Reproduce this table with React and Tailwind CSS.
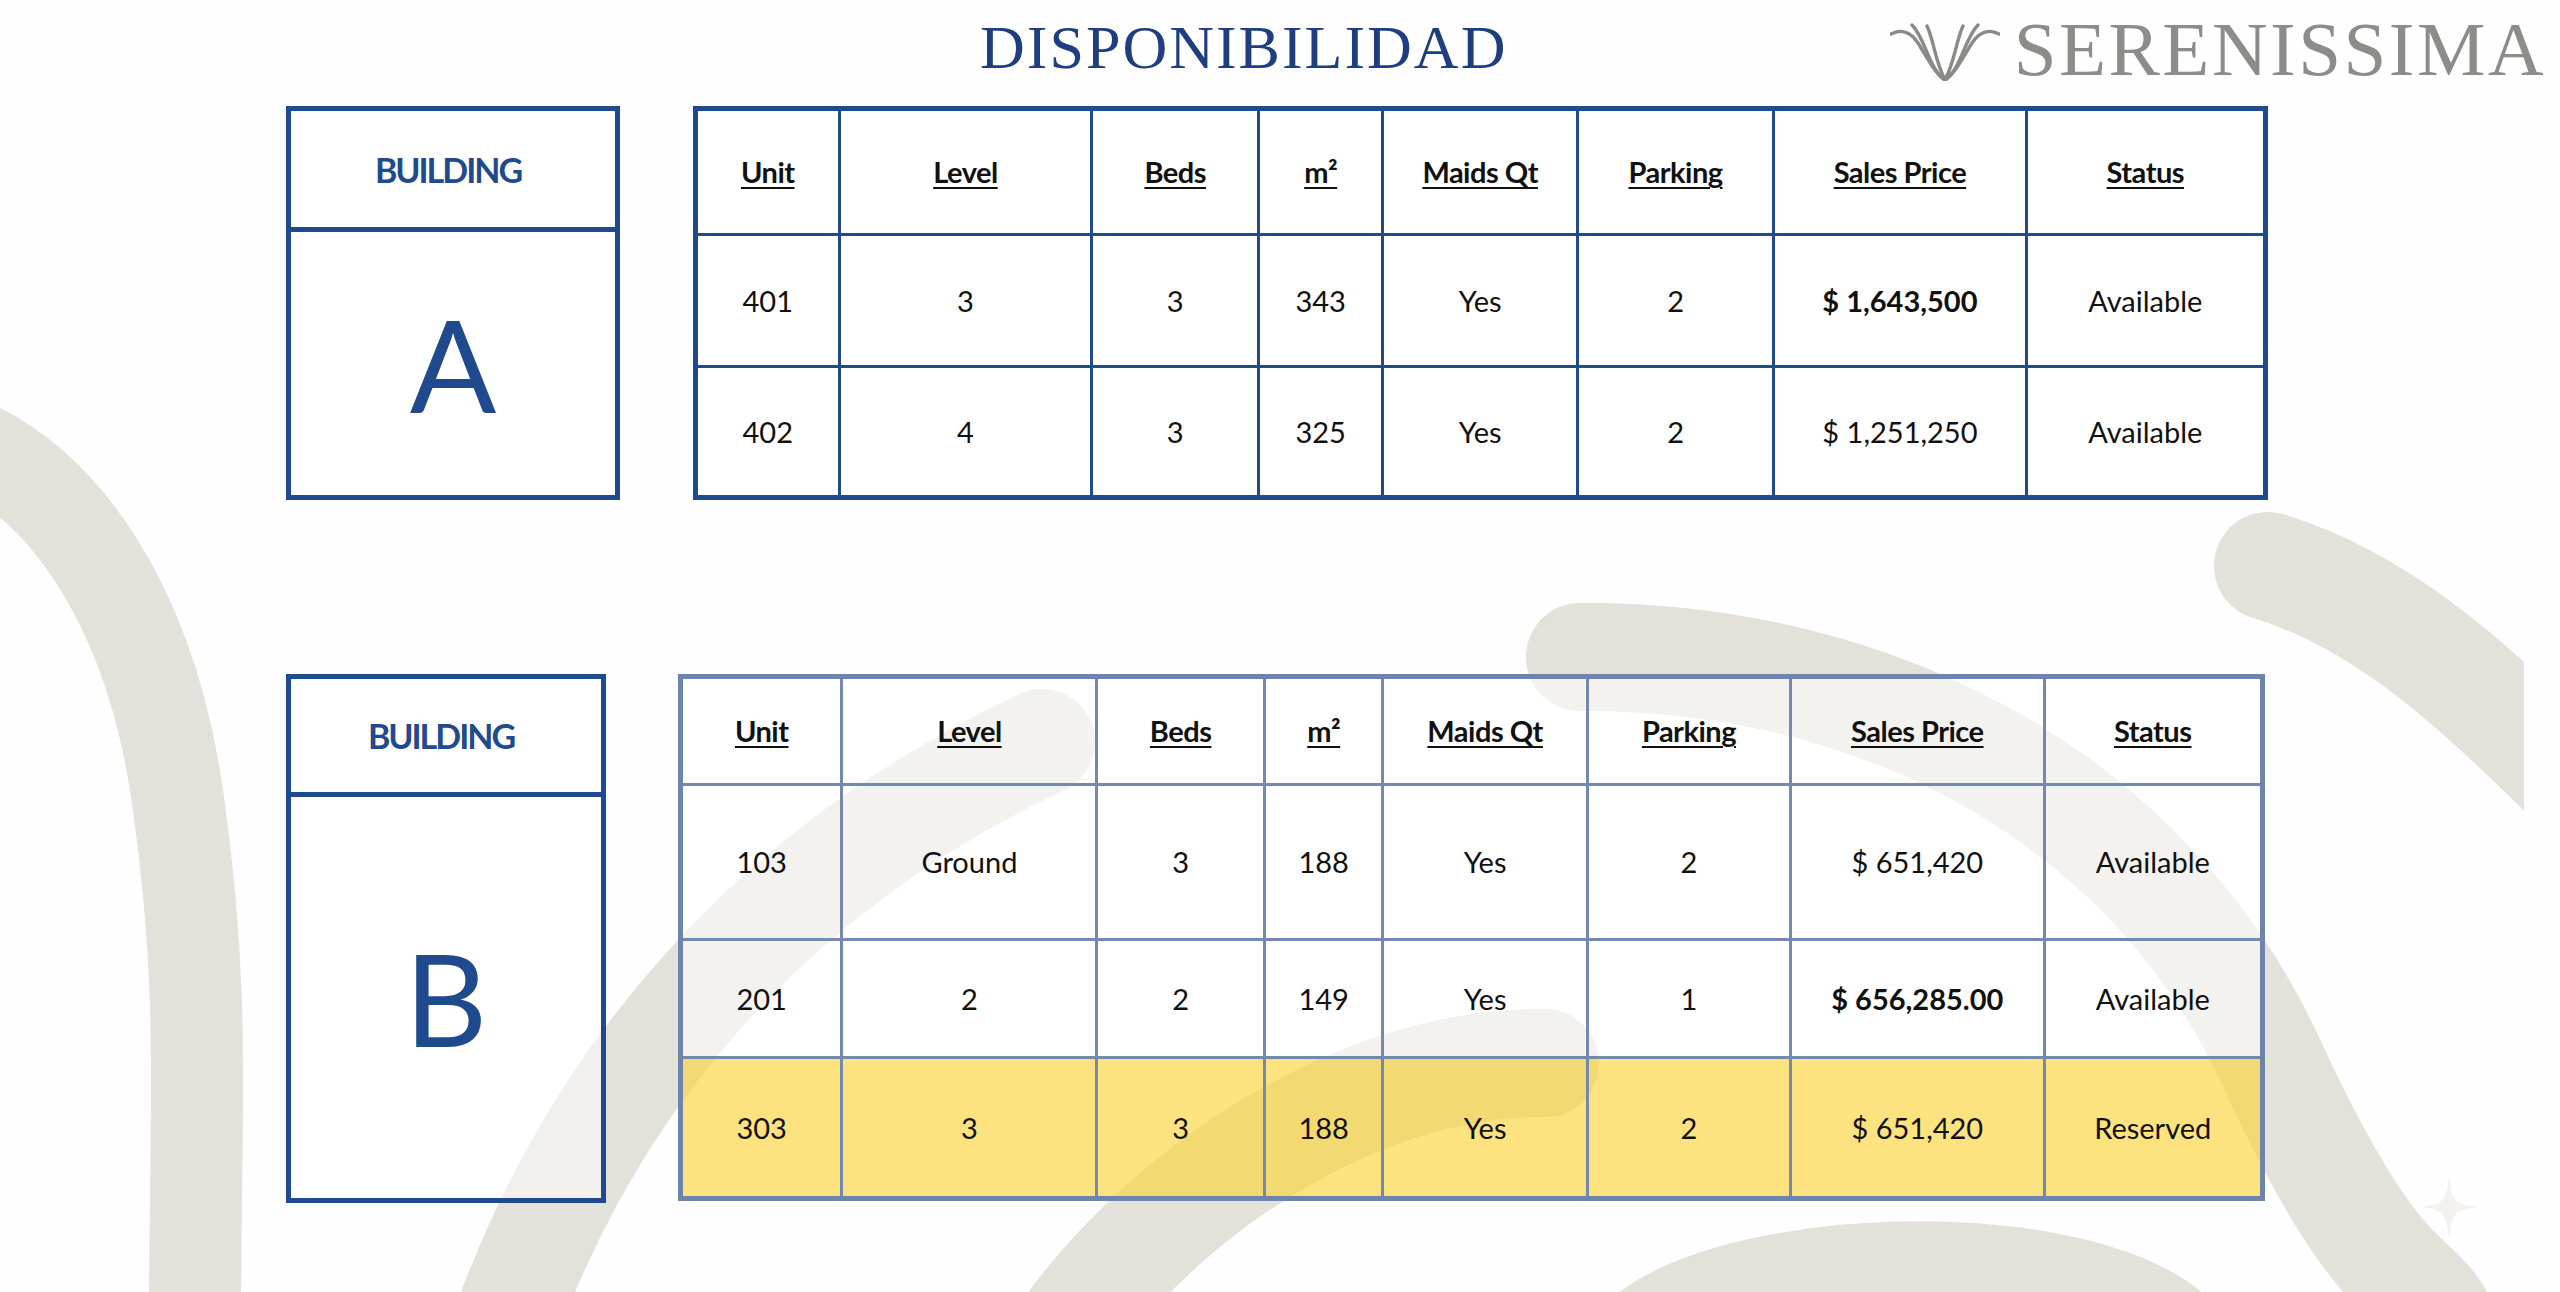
const headers = ["Unit", "Level", "Beds", "m²", "Maids Qt", "Parking", "Sales Price", "Status"];

const buildingA = {
  letter: "A",
  cols: [144, 254, 167, 125, 195, 197, 253, 240],
  heights: [126, 132, 131],
  rows: [
    { cells: ["401", "3", "3", "343", "Yes", "2", "$ 1,643,500", "Available"], bold: 6 },
    { cells: ["402", "4", "3", "325", "Yes", "2", "$ 1,251,250", "Available"] },
  ],
};

const buildingB = {
  letter: "B",
  cols: [162, 256, 168, 119, 205, 204, 254, 219],
  heights: [108, 155, 118, 141],
  rows: [
    { cells: ["103", "Ground", "3", "188", "Yes", "2", "$ 651,420", "Available"] },
    { cells: ["201", "2", "2", "149", "Yes", "1", "$ 656,285.00", "Available"], bold: 6 },
    { cells: ["303", "3", "3", "188", "Yes", "2", "$ 651,420", "Reserved"], reserved: true },
  ],
};

function Backdrop() {
  return (
    <svg
      className="absolute inset-0 h-full w-full pointer-events-none"
      viewBox="0 0 2560 1292"
      fill="none"
    >
      <defs>
        <clipPath id="slide">
          <rect x="0" y="0" width="2524" height="1292" />
        </clipPath>
      </defs>
      <g clipPath="url(#slide)" stroke="#e4e1da" strokeLinecap="round">
        <path d="M -40 440 C 60 480 150 600 178 800 S 195 1100 195 1330" strokeWidth="92" />
        <path d="M 500 1340 C 590 1080 770 870 1042 742" strokeWidth="106" />
        <path d="M 1060 1340 C 1180 1170 1380 1060 1545 1063" strokeWidth="108" />
        <path d="M 1580 657 C 1880 655 2150 800 2270 1060 S 2420 1260 2450 1340" strokeWidth="108" />
        <path d="M 2268 566 C 2380 600 2470 680 2580 790" strokeWidth="108" />
      </g>
      <path d="M 1610 1300 C 1720 1200 2100 1190 2210 1300 Z" fill="#e4e1da" />
      <path
        d="M 2449 1175 C 2452 1202 2454 1204 2478 1207 C 2454 1210 2452 1212 2449 1240 C 2446 1212 2444 1210 2420 1207 C 2444 1204 2446 1202 2449 1175 Z"
        fill="#f3f2ef"
      />
    </svg>
  );
}

function Emblem() {
  return (
    <svg width="110" height="58" viewBox="0 0 110 58" fill="none" stroke="#8a8a86" strokeWidth="3.4" strokeLinecap="round">
      <path d="M1 11 C10 6 20 8 28 20 C38 36 46 52 55 57" />
      <path d="M22 2 C32 12 36 30 44 44 C48 51 52 55 55 57" />
      <path d="M37 3 C44 18 45 38 55 57" />
      <path d="M73 3 C66 18 65 38 55 57" />
      <path d="M88 2 C78 12 74 30 66 44 C62 51 58 55 55 57" />
      <path d="M109 11 C100 6 90 8 82 20 C72 36 64 52 55 57" />
    </svg>
  );
}

function BuildingBox({ letter, width, headerH, box }) {
  return (
    <div className={`flex flex-col border-[5px] border-[#1f4a8e] ${box} ${width}`}>
      <div className={`flex items-center justify-center border-b-[5px] border-[#1f4a8e] pr-[10px] ${headerH}`}>
        <span className="font-['Lato',sans-serif] text-[34px] font-bold tracking-[-2px] text-[#1f4a8e]">BUILDING</span>
      </div>
      <div className="flex flex-1 items-center justify-center">
        <span className="font-['Lato',sans-serif] text-[128px] leading-none text-[#1f4a8e]">{letter}</span>
      </div>
    </div>
  );
}

function UnitTable({ data, outer, inner, cellBg, width }) {
  return (
    <table className={`border-collapse font-['Lato',sans-serif] text-[29px] text-[#111111] ${outer} ${width}`}>
      <colgroup>
        {data.cols.map((w, i) => (
          <col key={i} style={{ width: w }} />
        ))}
      </colgroup>
      <thead>
        <tr style={{ height: data.heights[0] }}>
          {headers.map((h) => (
            <th key={h} className={`font-bold tracking-[-0.5px] underline decoration-2 underline-offset-4 ${inner} ${cellBg}`}>
              {h}
            </th>
          ))}
        </tr>
      </thead>
      <tbody>
        {data.rows.map((row, r) => (
          <tr key={r} style={{ height: data.heights[r + 1] }}>
            {row.cells.map((c, i) => (
              <td
                key={i}
                className={`text-center ${inner} ${row.reserved ? "bg-[#fad43a]/65" : cellBg} ${
                  row.bold === i ? "font-bold" : "font-normal"
                }`}
              >
                {c}
              </td>
            ))}
          </tr>
        ))}
      </tbody>
    </table>
  );
}

export default function App() {
  return (
    <div className="relative h-[1292px] w-[2560px] overflow-hidden bg-[#fefefe]">
      <Backdrop />
      <div className="relative flex flex-col">
        <header className="flex h-[106px] items-start">
          <h1 className="ml-[980px] pt-[16px] font-['Liberation_Serif',serif] text-[62px] leading-[62px] tracking-[2px] text-[#1f3e80]">
            DISPONIBILIDAD
          </h1>
          <div className="ml-auto mr-[14px] flex items-start gap-[14px]">
            <div className="mt-[23px]">
              <Emblem />
            </div>
            <span className="pt-[11px] font-['Liberation_Serif',serif] text-[77px] leading-[77px] tracking-[2.5px] text-[#8c8c88]">
              SERENISSIMA
            </span>
          </div>
        </header>

        <section className="flex h-[394px] items-start gap-[73px] pl-[286px]">
          <BuildingBox letter="A" width="w-[334px]" headerH="h-[121px]" box="h-[394px] bg-white" />
          <UnitTable
            data={buildingA}
            width="w-[1575px]"
            outer="border-[5px] border-[#1f4a8e]"
            inner="border-[3px] border-[#1f4a8e]"
            cellBg="bg-white"
          />
        </section>

        <section className="mt-[174px] flex h-[529px] items-start gap-[72px] pl-[286px]">
          <BuildingBox letter="B" width="w-[320px]" headerH="h-[118px]" box="h-[529px] bg-white/50" />
          <UnitTable
            data={buildingB}
            width="w-[1587px]"
            outer="border-[5px] border-[#6d84ac]"
            inner="border-[3px] border-[#7489ad]"
            cellBg="bg-white/55"
          />
        </section>
      </div>
    </div>
  );
}
